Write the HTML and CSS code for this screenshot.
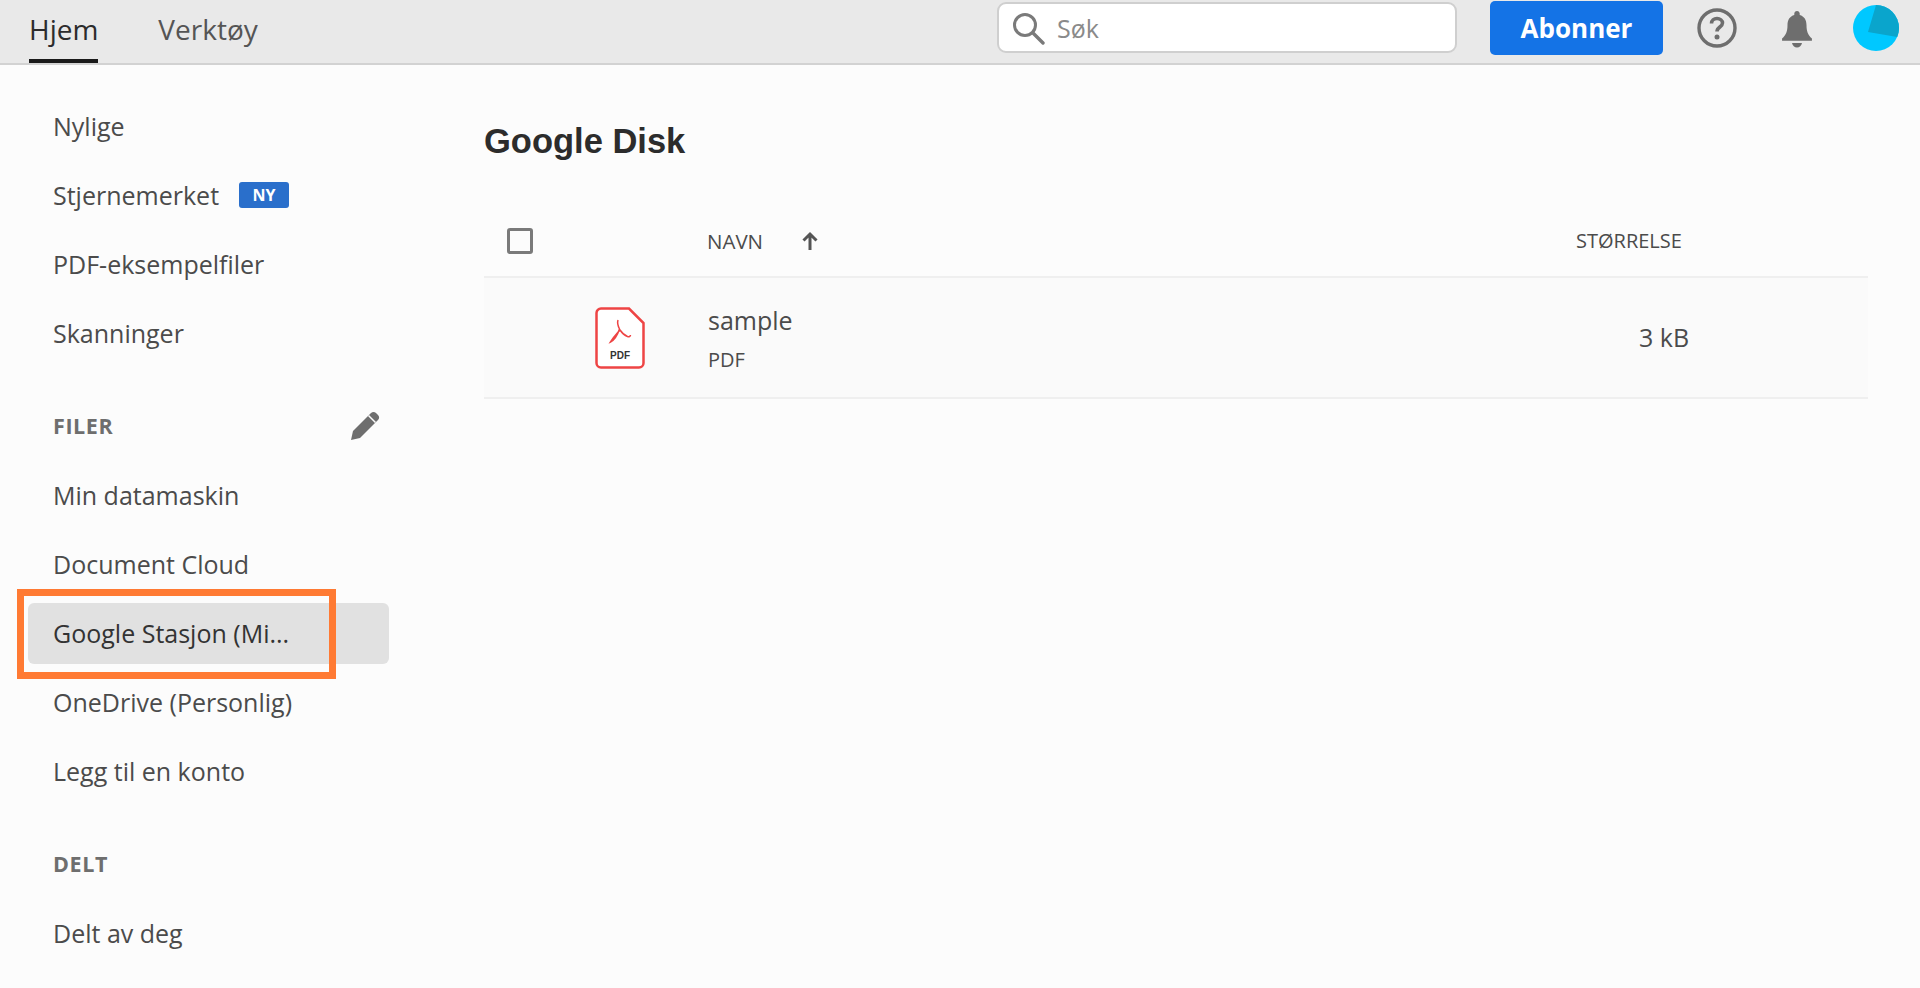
FILE: index.html
```html
<!DOCTYPE html>
<html lang="no">
<head>
  <meta charset="UTF-8" />
  <title>Google Disk</title>
  <link rel="stylesheet" href="styles.css">
</head>
<body>
  <header class="topbar">
    <nav class="tabs">
      <a class="tab active">Hjem</a>
      <a class="tab">Verktøy</a>
    </nav>
    <div class="search">
      <svg class="search-icon" viewBox="0 0 34 34" width="34" height="34"><circle cx="14" cy="14" r="10.5" fill="none" stroke="#7a7a7a" stroke-width="3"/><path d="M22 22l10 10" stroke="#7a7a7a" stroke-width="3.4" stroke-linecap="round"/></svg>
      <span>Søk</span>
    </div>
    <button class="subscribe">Abonner</button>
    <svg class="icon-help" viewBox="0 0 40 40" width="40" height="40"><circle cx="20" cy="20" r="18" fill="none" stroke="#6e6e6e" stroke-width="3.400"/><path d="M14.500 15.500c0-3 2.500-5 5.500-5s5.500 2 5.500 4.500c0 4-5.500 4-5.500 8.500" fill="none" stroke="#6e6e6e" stroke-width="3.600"/><circle cx="20" cy="29" r="2.500" fill="#6e6e6e"/></svg>
    <svg class="icon-bell" viewBox="0 0 34 42" width="32" height="38"><path d="M17 1c1.800 0 3 1.300 3 3v1.500c5 1.500 7.500 5.500 7.500 11 0 7 1.500 11 6 15v2.500H.5V31.500c4.500-4 6-8 6-15 0-5.500 2.500-9.500 7.500-11V4c0-1.700 1.200-3 3-3z" fill="#6e6e6e"/><path d="M11.500 36.500h11c-.5 3-2.800 5-5.500 5s-5-2-5.500-5z" fill="#6e6e6e"/></svg>
    <svg class="avatar" viewBox="0 0 46 46" width="46" height="46"><circle cx="23" cy="23" r="23" fill="#00c8ff"/><path d="M15 27L23 .1A23 23 0 0 1 46 23c0 3-.6 6-1.800 9z" fill="#0aa5cc"/></svg>
  </header>

  <div class="layout">
    <aside class="sidebar">
      <a class="item">Nylige</a>
      <a class="item">Stjernemerket <span class="badge">NY</span></a>
      <a class="item">PDF-eksempelfiler</a>
      <a class="item">Skanninger</a>

      <div class="heading">
        <span>FILER</span>
        <svg viewBox="0 0 30 30" width="30" height="30"><path d="M0 30l2-9L20 3c1.500-1.500 3.500-1.500 5 0l2 2c1.500 1.500 1.500 3.500 0 5L9 28z" fill="#6e6e6e"/><path d="M17.500 5.500l7 7" stroke="#fcfcfc" stroke-width="1.500"/></svg>
      </div>
      <a class="item">Min datamaskin</a>
      <a class="item">Document Cloud</a>
      <a class="item selected">Google Stasjon (Mi...</a>
      <a class="item">OneDrive (Personlig)</a>
      <a class="item">Legg til en konto</a>

      <div class="heading"><span>DELT</span></div>
      <a class="item">Delt av deg</a>

      <div class="highlight"></div>
    </aside>

    <main class="content">
      <h1>Google Disk</h1>
      <div class="table">
        <div class="row head">
          <span class="check"></span>
          <span class="name-col">NAVN
            <svg viewBox="0 0 18 20" width="18" height="20"><path d="M9 19V3M2.500 9.500L9 3l6.500 6.500" fill="none" stroke="#555" stroke-width="3"/></svg>
          </span>
          <span class="size-col">STØRRELSE</span>
        </div>
        <div class="row file">
          <svg class="pdf-icon" viewBox="0 0 50 62" width="50" height="62">
            <path d="M6 1.500h28L48.500 16v40a4.500 4.500 0 0 1-4.500 4.500H6A4.500 4.500 0 0 1 1.500 56V6A4.500 4.500 0 0 1 6 1.500z" fill="#fff" stroke="#ee4444" stroke-width="2.500"/>
            <path d="M23 13c-1 3 .5 7 1.500 9-2 6-5 11-9 13 3-5 6-8 9.500-12 2 3 5 5.500 7.500 6.500 1.500.5 3 0 3-1.500" fill="none" stroke="#ee4444" stroke-width="1.500"/>
            <text x="25" y="52" text-anchor="middle" class="pdf-label">PDF</text>
          </svg>
          <div class="file-name">
            <div class="title">sample</div>
            <div class="type">PDF</div>
          </div>
          <span class="file-size">3 kB</span>
        </div>
      </div>
    </main>
  </div>
</body>
</html>
```

FILE: styles.css
```css
html, body {
  height: 100%;
}
body {
  margin: 0;
  height: 988px;
  overflow: hidden;
  font-family: "Open Sans", "Noto Sans", sans-serif;
  background-color: #fcfcfc;
  color: #4b4b4b;
  display: flex;
  flex-direction: column;
}
.topbar {
  height: 65px;
  box-sizing: border-box;
  flex-shrink: 0;
  background-color: #e9e9e9;
  border-bottom: 2px solid #d2d2d2;
  display: flex;
  align-items: flex-start;
  padding-left: 29px;
}
.tabs {
  display: flex;
  gap: 60px;
  width: 968px;
}
.tab {
  height: 63px;
  box-sizing: border-box;
  font-size: 28px;
  line-height: 58px;
  color: #555;
}
.tab.active {
  color: #2c2c2c;
  border-bottom: 4px solid #1a1a1a;
}
.search {
  width: 460px;
  height: 51px;
  margin-top: 2px;
  box-sizing: border-box;
  background-color: #fff;
  border: 2px solid #cfcfcf;
  border-radius: 9px;
  display: flex;
  align-items: center;
  gap: 12px;
  padding-left: 12px;
  font-size: 25px;
  color: #8a8a8a;
}
.subscribe {
  width: 173px;
  height: 54px;
  margin: 1px 0 0 33px;
  border: none;
  border-radius: 5px;
  background-color: #1473e6;
  color: #fff;
  font-family: inherit;
  font-size: 26px;
  font-weight: 700;
}
.icon-help {
  margin: 8px 0 0 34px;
}
.icon-bell {
  margin: 10px 0 0 44px;
}
.avatar {
  margin: 5px 0 0 40px;
}
.layout {
  flex: 1;
  display: flex;
}
.sidebar {
  position: relative;
  width: 484px;
  flex-shrink: 0;
  box-sizing: border-box;
  padding: 31px 95px 0 28px;
}
.item {
  height: 61px;
  box-sizing: border-box;
  margin-bottom: 8px;
  padding: 0 0 2px 25px;
  border-radius: 6px;
  display: flex;
  align-items: center;
  gap: 20px;
  font-size: 25px;
  white-space: nowrap;
}
.item.selected {
  background-color: #e1e1e1;
  color: #333;
}
.badge {
  width: 50px;
  height: 26px;
  border-radius: 3px;
  background-color: #2a6fcb;
  color: #fff;
  font-size: 16px;
  font-weight: 700;
  text-align: center;
  line-height: 26px;
}
.heading {
  height: 34px;
  margin: 44px 8px 23px 25px;
  display: flex;
  align-items: center;
  justify-content: space-between;
  font-size: 21.5px;
  font-weight: 700;
  letter-spacing: 0.6px;
  color: #6e6e6e;
}
/* orange marker drawn over the selected row */
.highlight {
  position: absolute;
  left: 17px;
  top: 524px;
  width: 319px;
  height: 90px;
  box-sizing: border-box;
  border: 7px solid #ff7a33;
}
.content {
  flex: 1;
  padding-right: 52px;
}
h1 {
  margin: 0;
  padding-top: 52px;
  height: 112px;
  box-sizing: border-box;
  font-family: "Liberation Sans", Arial, sans-serif;
  font-size: 34.5px;
  line-height: 48px;
  color: #2c2c2c;
}
.row {
  display: flex;
  align-items: center;
  border-bottom: 2px solid #efefef;
}
.row.head {
  height: 101px;
  box-sizing: border-box;
  padding: 28px 0 0 23px;
  font-size: 20px;
}
.check {
  width: 26px;
  height: 26px;
  box-sizing: border-box;
  border: 3px solid #7a7a7a;
  border-radius: 3px;
}
.name-col {
  margin-left: 174px;
  width: 869px;
  display: flex;
  align-items: center;
  gap: 38px;
  font-size: 20.5px;
}
.row.file {
  height: 121px;
  box-sizing: border-box;
  background-color: #fafafa;
  padding-left: 111px;
}
.pdf-icon {
  flex-shrink: 0;
}
.pdf-label {
  font-family: "Liberation Sans", Arial, sans-serif;
  font-size: 10px;
  font-weight: 700;
  fill: #333;
}
.file-name {
  width: 931px;
  margin-left: 63px;
  padding-top: 5px;
}
.title {
  font-size: 25px;
  line-height: 40px;
}
.type {
  font-size: 20px;
  line-height: 40px;
}
.file-size {
  font-size: 25px;
  padding-bottom: 2px;
}
```
